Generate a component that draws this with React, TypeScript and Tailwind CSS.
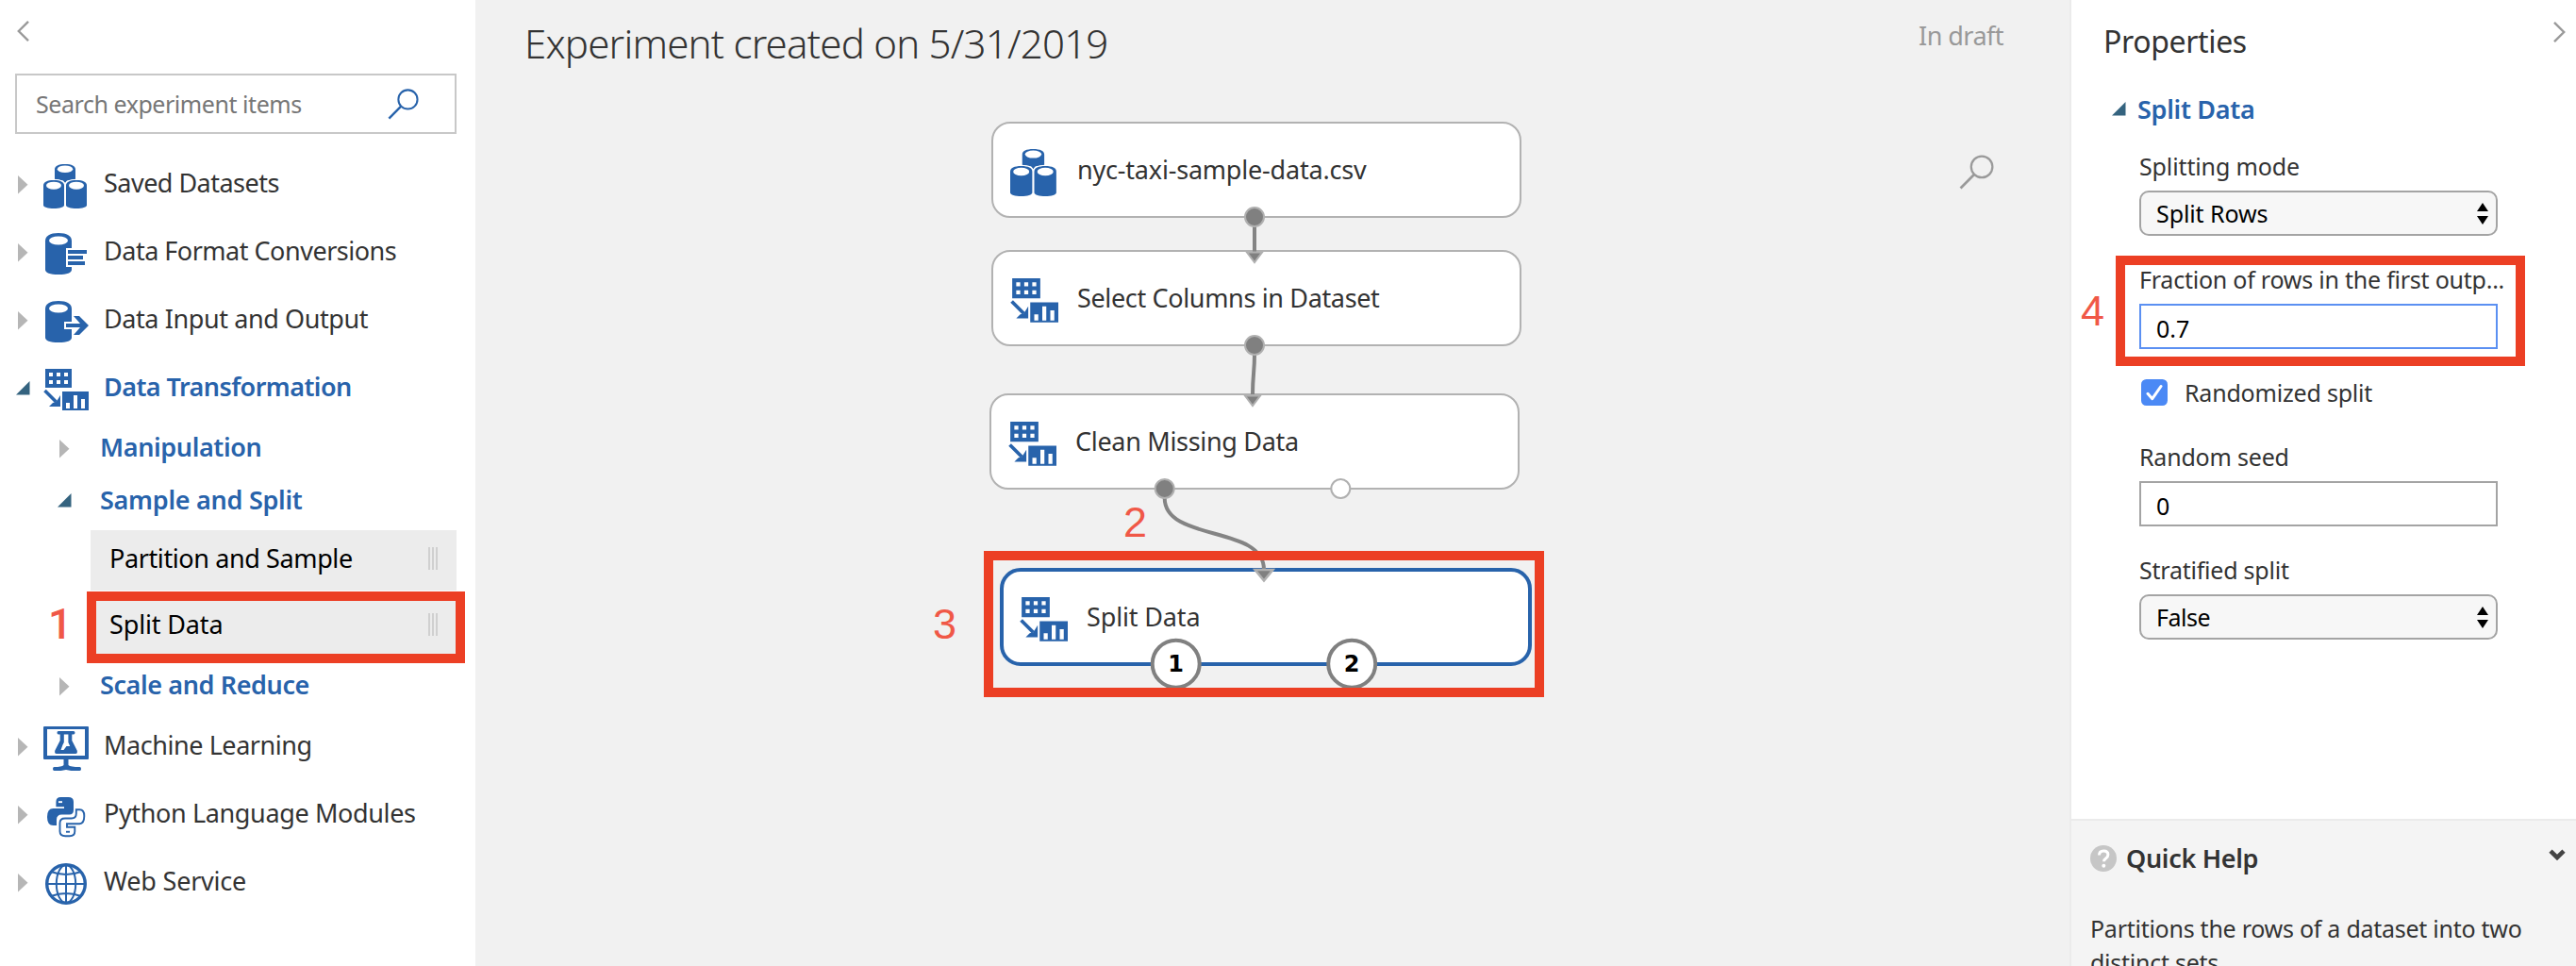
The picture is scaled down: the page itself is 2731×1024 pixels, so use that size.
import type { ReactNode } from "react";

const BLUE = "#2863ab";

/* ---------- icons ---------- */

function DatasetsIcon({ className }: { className: string }) {
  return (
    <svg viewBox="0 0 48 48" className={className}>
      <path d="M12 5.5C12 2 16 0 23 0s11 2 11 5.5V16l-9 1.5L23 20l-2-2.5L12 16z" fill={BLUE} />
      <ellipse cx="23" cy="5.2" rx="8.2" ry="3.8" fill="#fff" />
      {[0, 24].map((x) => (
        <g key={x} transform={`translate(${x} 0)`}>
          <path
            d="M0 22.5C0 19 4 17 11 17s11 2 11 5.5V43.500c0 2.300-5 3.500-11 3.500S0 45.800 0 43.500z"
            fill={BLUE}
            stroke="#fff"
            strokeWidth="2.600"
            paintOrder="stroke"
          />
          <ellipse cx="11" cy="22.700" rx="8" ry="4" fill="#fff" />
        </g>
      ))}
    </svg>
  );
}

function Cylinder() {
  return (
    <>
      <path d="M2 9.500C2 4 7 1 16 1s14 3 14 8.500V40c0 3-5 5-14 5S2 43 2 40z" fill={BLUE} />
      <ellipse cx="16" cy="9" rx="10" ry="4.500" fill="#fff" />
    </>
  );
}

function FormatIcon({ className }: { className: string }) {
  return (
    <svg viewBox="0 0 48 48" className={className}>
      <Cylinder />
      <path d="M24 17h24v20H24z" fill="#fff" />
      <path d="M26 19h20v4H26zM26 25h16v4H26zM26 31h18v4H26z" fill={BLUE} />
    </svg>
  );
}

function OutputIcon({ className }: { className: string }) {
  return (
    <svg viewBox="0 0 48 48" className={className}>
      <Cylinder />
      <path d="M22 23h12v8H22z" fill="#fff" />
      <path d="M24 25h15l-7-8h6l10 10-10 10h-6l7-8H24z" fill={BLUE} />
    </svg>
  );
}

function TransformIcon({ className }: { className: string }) {
  return (
    <svg viewBox="0 0 48 48" className={className}>
      <path
        fillRule="evenodd"
        fill={BLUE}
        d="M2 1h28v20H2zM6 5v4h4V5zM14 5v4h4V5zM22 5v4h4V5zM6 13v4h4v-4zM14 13v4h4v-4zM22 13v4h4v-4zM20 25h28v20H20zM24 37v6h4v-6zM32 29v14h4V29zM40 33v10h4V33z"
      />
      <path d="M1.500 24l12 12" stroke={BLUE} strokeWidth="3.600" />
      <path d="M18 29v12H6l4-4 3.500-1 2-3z" fill={BLUE} />
    </svg>
  );
}

function LearningIcon({ className }: { className: string }) {
  return (
    <svg viewBox="0 0 48 48" className={className}>
      <path
        fillRule="evenodd"
        fill={BLUE}
        d="M1 0h46q1 0 1 1v33q0 1-1 1H1q-1 0-1-1V1Q0 0 1 0zM4 3v28h40V3z"
      />
      <path d="M21.500 35h5v6q2 2 12 2 1.500 0 1.500 2t-1.500 2h-9l-5.500-1-5.500 1h-7q-1.500 0-1.500-2t1.500-2q8 0 10-2z" fill={BLUE} />
      <path d="M16 5h16q1.500 0 1.500 1.700T32 8.500h-1.700V15l5.400 10.500Q36.500 29 34 29H14q-2.500 0-1.700-3.500L17.700 15V8.500H16q-1.500 0-1.500-1.800T16 5z" fill={BLUE} />
      <path d="M21.800 8.500h4.600V17l1.800 4h-3.700l-3 4h-3l2-5.500 1.300-2.500z" fill="#fff" />
    </svg>
  );
}

function PythonIcon({ className }: { className: string }) {
  return (
    <svg viewBox="0 0 48 48" className={className}>
      <path
        fill={BLUE}
        d="M13.400 8q0-5 5-5h8Q32 3 32 8v8.500q0 5-4.500 5h-8Q14 21.500 14 27v6h-3.500Q4 33 4 24t6.500-9H22v-1.800h-8.600z"
      />
      <path d="M16 7.200h4v1.900h-4z" fill="#fff" />
      <path
        fill="none"
        stroke={BLUE}
        strokeWidth="1.900"
        d="M34.800 16.300h3.700q4.800 0 4.800 6.700 0 8-5 8.300H25v3.500h8.300v4.500q0 5-5.500 5h-4.500q-5.800 0-5.800-5V30.500q0-5 5.500-5h6.800q5 0 5-5z"
      />
      <path d="M24 38.800h4v1.900h-4z" fill={BLUE} />
    </svg>
  );
}

function GlobeIcon({ className }: { className: string }) {
  return (
    <svg viewBox="0 0 48 48" className={className} fill="none" stroke={BLUE} strokeWidth="2">
      <circle cx="24" cy="23" r="20.300" strokeWidth="3.400" />
      <ellipse cx="24" cy="23" rx="10.200" ry="20" />
      <path d="M24 2v42M3 23h42M8 10q16 6 32 0M8 36q16-6 32 0" />
    </svg>
  );
}

function SearchIcon({ className }: { className: string }) {
  return (
    <svg viewBox="0 0 36 36" className={className} fill="none" stroke="currentColor" strokeWidth="2.200">
      <circle cx="23.400" cy="12.500" r="11" />
      <path d="M15.500 20.400L1.500 34.500" strokeWidth="2.600" />
    </svg>
  );
}

function Collapsed() {
  return (
    <svg viewBox="0 0 11 20" className="h-[20px] w-[11px]">
      <path d="M0 0l10.500 9.800L0 19.500z" fill="#b6b6b6" />
    </svg>
  );
}

function Expanded() {
  return (
    <svg viewBox="0 0 15 15" className="h-[15px] w-[15px]">
      <path d="M14.500 0v14.500H0z" fill="#34637f" />
    </svg>
  );
}

function Grip() {
  return (
    <span className="flex h-6 gap-[2px]">
      <span className="w-[2px] bg-[#d0d0d0]" />
      <span className="w-[2px] bg-[#d0d0d0]" />
      <span className="w-[2px] bg-[#d0d0d0]" />
    </span>
  );
}

/* ---------- left palette ---------- */

function Category({ icon, label, open = false }: { icon: ReactNode; label: ReactNode; open?: boolean }) {
  return (
    <div className="flex h-[72px] items-center pb-[1px]">
      <span className={open ? "mt-[4px] w-[28px] pl-[1px]" : "mt-[4px] w-[28px] pl-[3px]"}>
        {open ? <Expanded /> : <Collapsed />}
      </span>
      <span className="mt-4 ml-[2px] w-[64px] self-start">{icon}</span>
      {label}
    </div>
  );
}

function Group({ label, open = false }: { label: ReactNode; open?: boolean }) {
  return (
    <div className="flex h-[56px] items-center pb-[1px]">
      <span className={open ? "mt-[2px] w-[90px] pl-[45px]" : "mt-[5px] w-[90px] pl-[47px]"}>
        {open ? <Expanded /> : <Collapsed />}
      </span>
      {label}
    </div>
  );
}

const ICON = "block h-[48px] w-[48px]";
const CAT = "text-[27px] leading-[37px] whitespace-nowrap text-[#333]";
const BOLD = "text-[27px] leading-[37px] whitespace-nowrap font-semibold text-[#2863ab]";

function Palette() {
  return (
    <aside className="flex w-[504px] shrink-0 flex-col bg-white px-4">
      <div className="flex h-[78px] pt-[22px] pl-[2px]">
        <svg viewBox="0 0 13 22" className="h-[22px] w-[13px]" fill="none" stroke="#9a9a9a" strokeWidth="2.400">
          <path d="M12 .8L1.800 11 12 21.200" />
        </svg>
      </div>
      <div className="flex h-[64px] w-[468px] items-center border-2 border-[#c8c8c8] pr-[38px] pl-[20px]">
        <span className="flex-1 pb-[1px] text-[25px] leading-[34px] tracking-[-0.45px] text-[#777]">
          Search experiment items
        </span>
        <SearchIcon className="h-[33px] w-[33px] text-[#2863ab]" />
      </div>
      <nav className="flex w-[468px] flex-col pt-4">
        <Category icon={<DatasetsIcon className={ICON} />} label={<span className={`${CAT} tracking-[-0.52px]`}>Saved Datasets</span>} />
        <Category icon={<FormatIcon className={ICON} />} label={<span className={`${CAT} tracking-[-0.49px]`}>Data Format Conversions</span>} />
        <Category icon={<OutputIcon className={ICON} />} label={<span className={`${CAT} tracking-[-0.41px]`}>Data Input and Output</span>} />
        <Category open icon={<TransformIcon className={ICON} />} label={<span className={`${BOLD} tracking-[-0.57px]`}>Data Transformation</span>} />
        <Group label={<span className={`${BOLD} tracking-[-0.37px]`}>Manipulation</span>} />
        <Group open label={<span className={`${BOLD} tracking-[-0.27px]`}>Sample and Split</span>} />
        <div className="flex flex-col gap-[6px] pt-1 pb-[2px] pl-[80px] text-[27px] leading-[37px] text-black">
          <div className="flex h-[64px] items-center justify-between bg-[#ececec] pr-5 pb-[5px] pl-5">
            <span className="tracking-[-0.39px]">Partition and Sample</span>
            <Grip />
          </div>
          <div className="relative flex h-[64px] items-center justify-between bg-[#ececec] pr-5 pb-[5px] pl-5">
            <span className="tracking-[-0.14px]">Split Data</span>
            <Grip />
            <span className="absolute -top-[5px] -left-[4px] h-[76px] w-[401px] border-[10px] border-[#ec3f24]" />
            <span className="absolute top-[4px] -left-[45px] font-['Roboto'] text-[45px] leading-[51px] font-medium text-[#f05847]">1</span>
          </div>
        </div>
        <Group label={<span className={`${BOLD} tracking-[-0.39px]`}>Scale and Reduce</span>} />
        <Category icon={<LearningIcon className={ICON} />} label={<span className={`${CAT} tracking-[-0.44px]`}>Machine Learning</span>} />
        <Category icon={<PythonIcon className={ICON} />} label={<span className={`${CAT} tracking-[-0.37px]`}>Python Language Modules</span>} />
        <Category icon={<GlobeIcon className={ICON} />} label={<span className={`${CAT} tracking-[-0.22px]`}>Web Service</span>} />
      </nav>
    </aside>
  );
}

/* ---------- experiment canvas ---------- */

const NODE = "absolute flex items-center bg-white pb-[1px] text-[27px] leading-[37px] whitespace-nowrap text-[#333]";
const PLAIN = "h-[102px] w-[562px] rounded-[20px] border-2 border-[#b2b2b2] pl-[18px]";
const NODE_ICON = "mt-[8px] mr-[20px] block h-[51px] w-[51px] shrink-0";

function Canvas() {
  return (
    <main className="relative flex-1 overflow-hidden bg-[#f1f1f1]">
      <header className="flex items-start justify-between pr-[70px] pl-[52px]">
        <h1 className="pt-[17px] text-[42px] leading-[57px] font-light tracking-[-0.78px] text-[#333]">
          Experiment created on 5/31/2019
        </h1>
        <span className="pt-[19px] text-[27px] leading-[37px] tracking-[-0.54px] text-[#999]">In draft</span>
      </header>
      <SearchIcon className="absolute top-[164px] left-[1573px] h-[37px] w-[37px] text-[#9a9a9a]" />

      <div className={`${NODE} ${PLAIN} top-[129px] left-[547px]`}>
        <DatasetsIcon className={NODE_ICON} />
        <span className="tracking-[-0.2px]">nyc-taxi-sample-data.csv</span>
      </div>
      <div className={`${NODE} ${PLAIN} top-[265px] left-[547px]`}>
        <TransformIcon className={NODE_ICON} />
        <span className="tracking-[-0.35px]">Select Columns in Dataset</span>
      </div>
      <div className={`${NODE} ${PLAIN} top-[417px] left-[545px]`}>
        <TransformIcon className={NODE_ICON} />
        <span className="tracking-[-0.31px]">Clean Missing Data</span>
      </div>
      <div className={`${NODE} top-[602px] left-[556px] h-[104px] w-[564px] rounded-[22px] border-4 border-[#2863ab] pl-[17px]`}>
        <TransformIcon className={NODE_ICON} />
        <span className="tracking-[-0.14px]">Split Data</span>
      </div>

      <svg viewBox="504 0 1690 1024" className="absolute top-0 left-0 h-[1024px] w-[1690px]">
        <g fill="none" stroke="#848484" strokeWidth="4">
          <path d="M1330 240v27" />
          <path d="M1330 376c0 18-2 22-2 42" />
          <path d="M1234.700 528C1235 575 1340 556 1340 604" />
        </g>
        <g fill="#808080" stroke="#b0b0b0" strokeWidth="2">
          <path d="M1322 267.500h16l-8 10.500z" />
          <path d="M1320 419.500h16l-8 10.500z" />
          <path d="M1330.500 604h19L1340 615.500z" strokeWidth="2.500" />
          <circle cx="1330" cy="230" r="10" />
          <circle cx="1330" cy="366" r="10" />
          <circle cx="1234.700" cy="518" r="10" />
          <circle cx="1421.300" cy="518" r="10" fill="#fff" />
        </g>
        <g fill="#fff" stroke="#808080" strokeWidth="4">
          <circle cx="1246.700" cy="703.700" r="25" />
          <circle cx="1433.200" cy="703.700" r="25" />
        </g>
        <g fill="#000" textAnchor="middle" className="font-['DejaVu_Sans'] text-[24px] font-bold">
          <text x="1246.700" y="712">1</text>
          <text x="1433" y="712">2</text>
        </g>
      </svg>

      <div className="absolute top-[584px] left-[539px] h-[155px] w-[594px] border-[10px] border-[#ec3f24]" />
      <span className="absolute top-[528px] left-[687px] font-['Liberation_Sans'] text-[45px] leading-[51px] text-[#f05847]">2</span>
      <span className="absolute top-[636px] left-[485px] font-['Liberation_Sans'] text-[45px] leading-[51px] text-[#f05847]">3</span>
    </main>
  );
}

/* ---------- properties ---------- */

const LABEL = "text-[25px] leading-[34px] whitespace-nowrap text-[#333]";

function Select({ children }: { children: ReactNode }) {
  return (
    <div className="mt-[9px] flex h-[48px] w-[380px] items-center justify-between rounded-[10px] border-2 border-[#a4a4a4] bg-[#f7f7f7] pr-2 pl-[16px] text-[25px] leading-[34px] text-black">
      {children}
      <svg viewBox="0 0 12 23" className="h-[23px] w-[12px]">
        <path d="M6 0l6 9H0zM6 23l6-9H0z" />
      </svg>
    </div>
  );
}

function Properties() {
  return (
    <aside className="flex w-[537px] shrink-0 flex-col border-l-2 border-[#ebebeb] bg-white">
      <div className="flex h-[97px] justify-between pt-[22px] pr-[11px] pl-[34px]">
        <h2 className="text-[32px] leading-[43px] tracking-[-0.36px] text-[#333]">Properties</h2>
        <svg viewBox="0 0 13 22" className="mt-[1px] h-[22px] w-[13px]" fill="none" stroke="#9a9a9a" strokeWidth="2.400">
          <path d="M1 .8L11.200 11 1 21.200" />
        </svg>
      </div>
      <div className="flex items-center pl-[43px]">
        <span className="w-[27px]">
          <Expanded />
        </span>
        <span className={`${BOLD} tracking-[-0.28px]`}>Split Data</span>
      </div>
      <div className="flex flex-1 flex-col pt-[25px] pl-[72px]">
        <div className={`${LABEL} tracking-[-0.13px]`}>Splitting mode</div>
        <Select>
          <span className="tracking-[-0.1px]">Split Rows</span>
        </Select>

        <div className="relative mt-[29px]">
          <div className={`${LABEL} tracking-[-0.23px]`}>Fraction of rows in the first outp...</div>
          <div className="mt-[9px] flex h-[48px] w-[380px] items-center border-2 border-[#5b90f2] pt-1 pl-[16px] text-[25px] leading-[34px] text-black">
            0.7
          </div>
          <span className="absolute -top-[8px] -left-[25px] h-[117px] w-[434px] border-[10px] border-[#ec3f24]" />
          <span className="absolute top-[25px] -left-[62px] font-['Liberation_Sans'] text-[45px] leading-[51px] text-[#f05847]">4</span>
        </div>

        <div className="mt-[29px] flex items-center pl-[2px]">
          <svg viewBox="0 0 28 28" className="mt-[2px] mb-[2px] h-[28px] w-[28px]">
            <rect width="28" height="28" rx="5.500" fill="#4b89f5" />
            <path d="M7 15.300l4.800 5.400L21 7.500" fill="none" stroke="#fff" strokeWidth="3" strokeLinecap="round" strokeLinejoin="round" />
          </svg>
          <span className={`${LABEL} ml-[18px] tracking-[-0.2px]`}>Randomized split</span>
        </div>

        <div className={`${LABEL} mt-[34px] tracking-[-0.2px]`}>Random seed</div>
        <div className="mt-[9px] flex h-[48px] w-[380px] items-center border-2 border-[#a4a4a4] pt-1 pl-[16px] text-[25px] leading-[34px] text-black">
          0
        </div>

        <div className={`${LABEL} mt-[29px] tracking-[-0.23px]`}>Stratified split</div>
        <Select>
          <span className="tracking-[-0.48px]">False</span>
        </Select>
      </div>

      <section className="flex h-[156px] shrink-0 flex-col overflow-hidden border-t-2 border-[#ebebeb] bg-[#f4f4f4] pt-[21px] pr-[11px] pl-[20px] text-[#333]">
        <div className="flex items-center">
          <svg viewBox="0 0 28 28" className="h-[28px] w-[28px]">
            <circle cx="14" cy="14" r="14" fill="#c6c6c6" />
            <path d="M9.500 10.500q0-4.500 4.700-4.500t4.700 4q0 2.300-2.400 3.900-2 1.300-2 3.300" fill="none" stroke="#fff" strokeWidth="3" />
            <circle cx="14.300" cy="21.700" r="2" fill="#fff" />
          </svg>
          <span className="ml-[10px] flex-1 text-[27px] leading-[37px] font-semibold tracking-[-0.31px]">Quick Help</span>
          <svg viewBox="0 0 18 12" className="mb-[7px] h-[12px] w-[18px]">
            <path d="M2 2.200l7 6.800 7-6.800" fill="none" stroke="#444" strokeWidth="4.600" />
          </svg>
        </div>
        <p className="mt-[38px] w-[490px] text-[25px] leading-[36px] tracking-[-0.26px]">
          Partitions the rows of a dataset into two distinct sets.
        </p>
      </section>
    </aside>
  );
}

export default function App() {
  return (
    <div className="flex h-[1024px] w-[2731px] overflow-hidden bg-[#f1f1f1] font-['Noto_Sans',sans-serif]">
      <Palette />
      <Canvas />
      <Properties />
    </div>
  );
}
